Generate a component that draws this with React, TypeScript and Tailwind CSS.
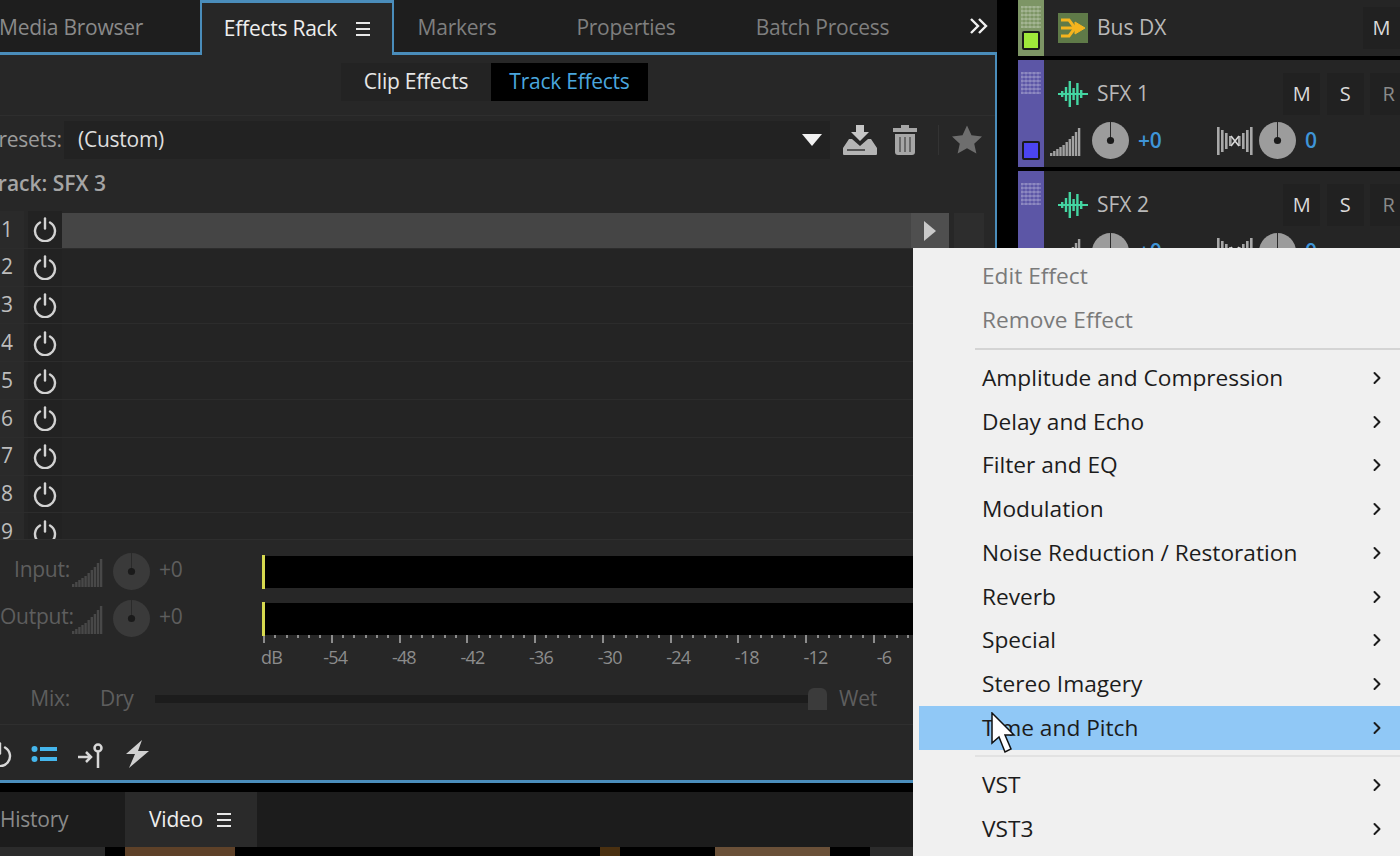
import { ChevronRight } from "lucide-react";

const UI_FONT = "font-['Open_Sans',sans-serif]";

const MENU_ITEMS = [
  "Amplitude and Compression",
  "Delay and Echo",
  "Filter and EQ",
  "Modulation",
  "Noise Reduction / Restoration",
  "Reverb",
  "Special",
  "Stereo Imagery",
  "Time and Pitch",
];

const RACK_ROWS = [1, 2, 3, 4, 5, 6, 7, 8, 9];
const DB_LABELS = ["-54", "-48", "-42", "-36", "-30", "-24", "-18", "-12", "-6"];
const SCALE_TICKS = Array.from({ length: 58 }, (_, i) => i);

function PowerIcon({ className = "" }: { className?: string }) {
  return (
    <svg className={className} width="26" height="26" viewBox="0 0 26 26" fill="none" stroke="currentColor" strokeWidth={2.4} strokeLinecap="round">
      <path d="M8 6.5a10 10 0 1 0 10 0" />
      <path d="M13 2.5v10" />
    </svg>
  );
}

function HamburgerIcon() {
  return (
    <svg width="14" height="16" viewBox="0 0 14 16" fill="none" stroke="#e8e8e8" strokeWidth={2}>
      <path d="M0 2h14M0 8h14M0 14h14" />
    </svg>
  );
}

function Knob({ size, className = "" }: { size: number; className?: string }) {
  return (
    <svg className={className} width={size} height={size} viewBox="0 0 36 36">
      <circle cx="18" cy="18" r="18" fill="currentColor" />
      <path d="M18 0v16" stroke="#2a2a2a" strokeWidth={1} />
      <circle cx="18" cy="18" r="3.5" fill="#1a1a1a" />
    </svg>
  );
}

function VolumeBars({ className = "" }: { className?: string }) {
  const bars = [3, 5, 7, 9, 11, 14, 17, 20, 24, 28];
  return (
    <svg className={className} width="32" height="30" viewBox="0 0 32 30" fill="currentColor">
      {bars.map((h, i) => (
        <rect key={i} x={i * 3.1} y={30 - h} width="2.4" height={h} />
      ))}
    </svg>
  );
}

function StereoIcon() {
  return (
    <svg width="36" height="30" viewBox="0 0 36 30" fill="#a8a8a8">
      {[0, 4, 8, 12].map((x, i) => (
        <rect key={x} x={x} y={1 + i * 3} width="2.6" height={28 - i * 6} />
      ))}
      {[21, 25, 29, 33].map((x, i) => (
        <rect key={x} x={x} y={10 - i * 3} width="2.6" height={10 + i * 6} />
      ))}
      <path d="M14 10l8 10M22 10l-8 10" stroke="#d8d8d8" strokeWidth={1.6} />
    </svg>
  );
}

function WaveIcon() {
  const bars = [6, 14, 26, 12, 22, 8];
  return (
    <svg width="30" height="28" viewBox="0 0 30 28" fill="#44d6a2">
      <rect x="0" y="13" width="30" height="2" />
      {bars.map((h, i) => (
        <rect key={i} x={3 + i * 3.8} y={14 - h / 2} width="2.4" height={h} />
      ))}
    </svg>
  );
}

function GripDots() {
  return (
    <div className="w-[20px] h-[22px] bg-[repeating-linear-gradient(0deg,rgba(255,255,255,0.2)_0_2px,transparent_2px_4px),repeating-linear-gradient(90deg,rgba(255,255,255,0.12)_0_2px,transparent_2px_4px)]" />
  );
}

function MsrButton({ label, dim }: { label: string; dim?: boolean }) {
  return (
    <div className={`w-[37px] h-[42px] shrink-0 bg-[#212121] flex items-center justify-center text-[20px] font-medium ${dim ? "text-[#8a8a8a]" : "text-[#dadada]"}`}>
      {label}
    </div>
  );
}

function TrackRow({ name }: { name: string }) {
  return (
    <div className="h-[109px] shrink-0 flex gap-[2px] bg-[#252525] border-b-2 border-black">
      <div className="w-[26px] bg-[#5c56a6] pt-[12px] pb-[7px] flex flex-col items-center justify-between">
        <GripDots />
        <div className="w-[18px] h-[19px] bg-[#4b44f0] border-2 border-[#1a1a1a] rounded-[2px]" />
      </div>
      <div className="flex-1 pl-[12px] pt-[13px] min-w-0">
        <div className="flex items-center h-[42px]">
          <WaveIcon />
          <span className="ml-[9px] text-[#b9b9b9] text-[21px] tracking-[0] font-medium">{name}</span>
          <div className="ml-auto flex gap-[6.5px] mr-[-7px]">
            <MsrButton label="M" />
            <MsrButton label="S" />
            <MsrButton label="R" dim />
          </div>
        </div>
        <div className="flex items-center mt-[7px] -ml-[8px]">
          <VolumeBars className="text-[#a2a2a2]" />
          <Knob size={37} className="ml-[10px] text-[#9c9c9c]" />
          <span className="ml-[9px] w-[79px] text-[#3f95d8] text-[21px] font-semibold">+0</span>
          <StereoIcon />
          <Knob size={37} className="ml-[6px] text-[#9c9c9c]" />
          <span className="ml-[9px] text-[#3f95d8] text-[21px] font-semibold">0</span>
        </div>
      </div>
    </div>
  );
}

function Tab({ label, width }: { label: string; width: string }) {
  return (
    <div className={`${width} h-full pt-[3px] flex items-center justify-center text-[#7f7f7f] border-b-[3px] border-[#4a8dbb]`}>
      {label}
    </div>
  );
}

function MeterRow({ label }: { label: string }) {
  return (
    <div className="flex items-center h-[47px]">
      <span className="w-[70px] text-right -mt-[4px]">{label}</span>
      <VolumeBars className="ml-[2px] text-[#484848]" />
      <Knob size={37} className="ml-[9px] text-[#3a3a3a]" />
      <span className="ml-[9px] w-[103px] -mt-[4px]">+0</span>
      <div className="relative flex-1 h-[32px] bg-black">
        <div className="absolute left-0 -top-[1px] w-[3px] h-[34px] bg-[#d6d94f]" />
      </div>
    </div>
  );
}

function RackPanel() {
  return (
    <div className="h-[728px] shrink-0 bg-[#272727] border-r-2 border-b-[3px] border-[#4a8dbb] flex flex-col overflow-hidden">
      {/* clip / track switch */}
      <div className="h-[52px] shrink-0 flex items-center justify-center pt-[2px] pr-[6px]">
        <div className="w-[150px] h-[38px] bg-[#232323] flex items-center justify-center text-[#e6e6e6] font-medium">Clip Effects</div>
        <div className="w-[157px] h-[38px] bg-black flex items-center justify-center text-[#4aa6de] font-medium">Track Effects</div>
      </div>

      {/* presets */}
      <div className="h-[48px] shrink-0 mt-[8px] flex items-center border-t border-[#2e2e2e]">
        <span className="-ml-[14px] w-[78px] text-[#9b9b9b] shrink-0 pt-[1px]">Presets:</span>
        <div className="w-[766px] h-[38px] bg-[#222222] flex items-center pl-[14px] pr-[8px] text-[#dedede] pt-[1px]">
          (Custom)
          <svg className="ml-auto" width="20" height="12" viewBox="0 0 20 12" fill="#f2f2f2">
            <path d="M0 0h20L10 12z" />
          </svg>
        </div>
        <svg className="ml-[13px]" width="34" height="30" viewBox="0 0 34 30">
          <path d="M13 0h8v7h5l-9 9-9-9h5z" fill="#c6c6c6" />
          <path d="M6 14h3l8 7 8-7h3l6 9v6a1 1 0 0 1-1 1H1a1 1 0 0 1-1-1v-6z" fill="#b4b4b4" />
          <rect x="4" y="24" width="18" height="2" fill="#555" />
        </svg>
        <svg className="ml-[16px]" width="24" height="30" viewBox="0 0 24 30" fill="#a6a6a6">
          <path d="M8 0h8v3h7a1 1 0 0 1 1 4H0a1 1 0 0 1 1-4h7z" />
          <path d="M2 9h20v18a3 3 0 0 1-3 3H5a3 3 0 0 1-3-3z" />
          <path d="M7 12v15M12 12v15M17 12v15" stroke="#555" strokeWidth={1.5} />
        </svg>
        <div className="ml-[21px] w-px h-[30px] bg-[#333333]" />
        <svg className="ml-[13px]" width="30" height="29" viewBox="0 0 32 30" fill="#6e6e6e">
          <path d="M16 0l4.8 10.4L32 11.7l-8.3 7.7L26 30l-10-5.6L6 30l2.3-10.6L0 11.7l11.2-1.3z" />
        </svg>
      </div>

      <div className="h-[38px] shrink-0 flex items-center pt-[3px] -ml-[14px] text-[#a5a5a5] font-semibold tracking-[0]">Track: SFX 3</div>

      {/* effect slots */}
      <div className="mt-[10px] h-[328px] overflow-hidden shrink-0">
        {RACK_ROWS.map((n) => (
          <div key={n} className={`h-[37.8px] flex items-center border-b border-[#2c2c2c] ${n === 1 ? "bg-[#272727]" : "bg-[#242424]"}`}>
            <div className="w-[24px] h-full bg-[#2a2a2a] flex items-center pl-[1px] text-[#bdbdbd] font-medium">{n}</div>
            <div className="ml-[4px] w-[34px] h-full bg-[#222222] flex items-center justify-center">
              <PowerIcon className="text-[#d2d2d2]" />
            </div>
            {n === 1 && (
              <div className="flex-1 h-[35px] mt-[3px] flex">
                <div className="flex-1 bg-[#454545]" />
                <div className="w-[38px] bg-[#4f4f4f] flex items-center justify-center">
                  <svg width="12" height="20" viewBox="0 0 12 20" fill="#c9c9c9"><path d="M0 0l12 10L0 20z" /></svg>
                </div>
                <div className="ml-[5px] w-[30px] bg-[#2d2d2d] mr-[11px]" />
              </div>
            )}
          </div>
        ))}
      </div>

      {/* meters */}
      <div className="flex-1 min-h-0 border-t border-[#2e2e2e] text-[#5e5e5e]">
        <div className="mt-[8px]" />
        <MeterRow label="Input:" />
        <MeterRow label="Output:" />
        <div className="pl-[263px] -mt-[7px] h-[8px] flex items-start gap-[9.3px]">
          {SCALE_TICKS.map((i) => (
            <div key={i} className={`w-[2px] shrink-0 bg-[#8c8c8c] ${i % 6 === 0 ? "h-[8px]" : "h-[3px]"}`} />
          ))}
        </div>
        <div className="flex pl-[261px] mt-[1px] h-[26px] items-center text-[18px] text-[#8c8c8c] tracking-[-0.8px]">
          <span className="w-[40px] shrink-0">dB</span>
          {DB_LABELS.map((d) => (
            <span key={d} className="w-[68.6px] shrink-0 text-center">{d}</span>
          ))}
        </div>

        <div className="flex items-center h-[40px] mt-[9px]">
          <span className="w-[70px] text-right">Mix:</span>
          <span className="ml-[30px] w-[55px]">Dry</span>
          <div className="relative w-[670px] h-[8px] bg-[#1c1c1c]">
            <div className="absolute left-[653px] -top-[7px] w-[19px] h-[22px] bg-[#3b3b3b] rounded-t-[6px]" />
          </div>
          <span className="ml-[14px]">Wet</span>
        </div>

        <div className="mt-[5px] h-[58px] border-t border-[#2f2f2f] flex items-center -ml-[13px]">
          <PowerIcon className="text-[#d8d8d8]" />
          <svg className="ml-[18px]" width="26" height="18" viewBox="0 0 26 18" fill="#45b6ec">
            <circle cx="3.5" cy="4" r="3" /><circle cx="3.5" cy="14" r="3" />
            <rect x="9" y="2" width="17" height="4" /><rect x="9" y="12" width="17" height="4" />
          </svg>
          <svg className="ml-[21px]" width="28" height="28" viewBox="0 0 28 28" fill="none" stroke="#d8d8d8" strokeWidth={2.5}>
            <path d="M0 17h12M8 12l5 5-5 5" />
            <circle cx="20" cy="8" r="3.5" />
            <path d="M20 12v16" />
          </svg>
          <svg className="ml-[17px]" width="28" height="28" viewBox="0 0 28 28" fill="#d0d0d0">
            <path d="M19 0L3 14h9L6 28l20-17H15z" />
          </svg>
        </div>
      </div>
    </div>
  );
}

export default function App() {
  return (
    <div className={`relative w-[1400px] h-[856px] overflow-hidden bg-black flex text-[21px] tracking-[-0.25px] ${UI_FONT}`}>
      {/* left panel column */}
      <div className="w-[997px] shrink-0 flex flex-col">
        <div className="h-[55px] flex items-stretch bg-[#1e1e1e] shrink-0">
          <div className="w-[200px] h-full pt-[3px] flex items-center -indent-[1px] text-[#8a8a8a] border-b-[3px] border-[#4a8dbb]">Media Browser</div>
          <div className="w-[194px] h-full -mb-[3px] flex items-center justify-center gap-[19px] text-[#eeeeee] font-medium bg-[#272727] border-x-2 border-t-[3px] border-[#4a8dbb]">
            Effects Rack
            <HamburgerIcon />
          </div>
          <Tab label="Markers" width="w-[126px]" />
          <Tab label="Properties" width="w-[212px]" />
          <Tab label="Batch Process" width="w-[181px]" />
          <div className="flex-1 flex items-center justify-end pr-[8px] border-b-[3px] border-[#4a8dbb]">
            <svg width="20" height="16" viewBox="0 0 20 16" fill="none" stroke="#f0f0f0" strokeWidth={2.4}>
              <path d="M2 1l7 7-7 7M10 1l7 7-7 7" />
            </svg>
          </div>
        </div>

        <RackPanel />

        <div className="mt-[9px] h-[55px] flex bg-[#1c1c1c] shrink-0">
          <div className="w-[125px] flex items-center text-[#8a8a8a]">History</div>
          <div className="w-[132px] bg-[#2a2a2a] flex items-center justify-center gap-[14px] text-[#eeeeee] font-medium pr-[2px]">
            Video
            <HamburgerIcon />
          </div>
        </div>
        <div className="flex-1 bg-black flex">
          <div className="w-[105px] bg-[#2b2b2b]" />
          <div className="ml-[20px] w-[110px] bg-[#5e4128]" />
          <div className="ml-[365px] w-[20px] bg-[#4a3010]" />
          <div className="ml-[95px] w-[115px] bg-[#6a5038]" />
          <div className="ml-[40px] w-[43px] bg-[#2b2b2b]" />
        </div>
      </div>

      {/* track list */}
      <div className="ml-[21px] flex-1 flex flex-col gap-[2px] min-w-0">
        <div className="h-[58px] shrink-0 flex gap-[2px] bg-[#252525] border-b-2 border-black">
          <div className="w-[26px] bg-[#7d9565] pt-[6px] pb-[6px] flex flex-col items-center justify-between">
            <GripDots />
            <div className="w-[18px] h-[19px] bg-[#9fe83a] border-2 border-[#1a1a1a] rounded-[2px]" />
          </div>
          <div className="flex-1 flex items-center pl-[12px] text-[#b9b9b9] font-medium tracking-[0] min-w-0">
            <div className="w-[30px] h-[30px] bg-[#5f7a48] flex items-center justify-center">
              <svg width="26" height="22" viewBox="0 0 26 22" fill="none" stroke="#f4b41e" strokeWidth={3}>
                <path d="M1 3h8l6 8-6 8H1" />
                <path d="M1 11h14" />
                <path d="M15 5l10 6-10 6z" fill="#f4b41e" strokeWidth={1} />
              </svg>
            </div>
            <span className="ml-[9px]">Bus DX</span>
            <div className="ml-auto -mr-[7px] w-[37px] h-[42px] shrink-0 bg-[#212121] flex items-center justify-center -translate-x-[7px] text-[20px] text-[#dadada]">M</div>
          </div>
        </div>
        <TrackRow name="SFX 1" />
        <TrackRow name="SFX 2" />
      </div>

      {/* context menu */}
      <div className="absolute left-[913px] top-[248px] right-0 bottom-0 bg-[#f0f0f0] pt-[6px] pl-[6px] text-[#1c1c1c] text-[22.7px] tracking-normal">
        <div className="h-[44px] flex items-center pl-[63px] text-[#7a7a7a]">Edit Effect</div>
        <div className="h-[44px] flex items-center pl-[63px] text-[#7a7a7a]">Remove Effect</div>
        <div className="h-[14px] flex items-center pl-[56px]"><div className="w-full h-[2px] bg-[#d4d4d4]" /></div>
        {MENU_ITEMS.map((item) => (
          <div key={item} className={`h-[43.75px] flex items-center justify-between pl-[63px] pr-[13px] ${item === "Time and Pitch" ? "bg-[#90c8f6]" : ""}`}>
            {item}
            <ChevronRight size={20} strokeWidth={2.4} />
          </div>
        ))}
        <div className="h-[13px] flex items-center pl-[56px]"><div className="w-full h-[2px] bg-[#e2e2e2]" /></div>
        {["VST", "VST3"].map((item) => (
          <div key={item} className="h-[44px] flex items-center justify-between pl-[63px] pr-[13px]">
            {item}
            <ChevronRight size={20} strokeWidth={2.4} />
          </div>
        ))}
      </div>

      {/* mouse cursor */}
      <svg className="absolute left-[990px] top-[712px]" width="26" height="42" viewBox="0 0 26 42">
        <path d="M2 1v30l7-6 6 15 6-3-6-14h9z" fill="#ffffff" stroke="#111111" strokeWidth={1.5} />
      </svg>
    </div>
  );
}
